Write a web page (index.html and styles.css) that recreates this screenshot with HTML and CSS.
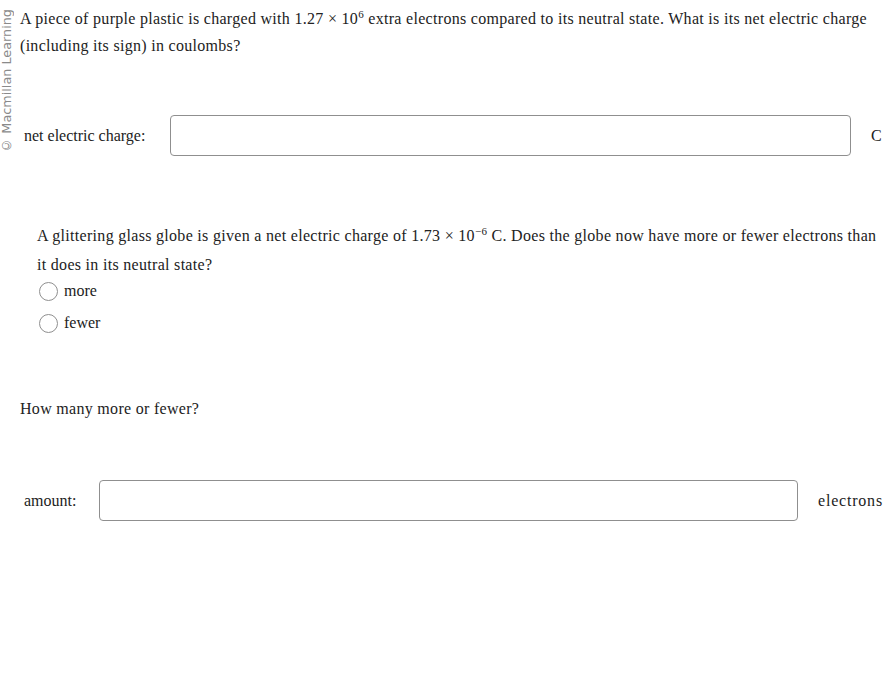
FILE: index.html
```html
<!DOCTYPE html>
<html lang="en">
<head>
  <meta charset="UTF-8">
  <title>Electric Charge</title>
  <link rel="stylesheet" href="styles.css">
</head>
<body>

<div class="page">
  <div class="credit">© Macmillan Learning</div>

  <div class="content">
    <p class="question q1">
      A piece of purple plastic is charged with 1.27 × 10<sup>6</sup> extra electrons compared to its neutral state. What is its net electric charge (including its sign) in coulombs?
    </p>

    <div class="answer-row row-charge">
      <label for="charge" class="answer-label">net electric charge:</label>
      <input type="text" id="charge" class="answer-input">
      <span class="unit">C</span>
    </div>

    <div class="part">
      <p class="question q2">
        A glittering glass globe is given a net electric charge of 1.73 × 10<sup>−6</sup> C. Does the globe now have more or fewer electrons than it does in its neutral state?
      </p>
      <label class="choice"><span class="radio"></span>more</label>
      <label class="choice"><span class="radio"></span>fewer</label>
    </div>

    <p class="question q3">How many more or fewer?</p>

    <div class="answer-row row-amount">
      <label for="amount" class="answer-label">amount:</label>
      <input type="text" id="amount" class="answer-input">
      <span class="unit unit-wide">electrons</span>
    </div>
  </div>
</div>

</body>
</html>
```

FILE: styles.css
```css
body {
  margin: 0;
  padding: 0;
  background: #fff;
  color: #222;
  font-family: 'Liberation Serif', 'Times New Roman', serif;
  font-size: 16px;
}

.page {
  display: flex;
  align-items: flex-start;
}

.credit {
  writing-mode: vertical-rl;
  transform: rotate(180deg);
  font-family: 'DejaVu Sans', sans-serif;
  font-size: 12.8px;
  color: #8a8a8a;
  width: 14px;
  margin-top: 9px;
  line-height: 14px;
}

.content {
  flex: 1;
  padding-left: 6px;
  padding-right: 4px;
}

.question {
  margin: 0;
  letter-spacing: 0.3px;
}

.q1 {
  padding-top: 5px;
  line-height: 27px;
}

sup {
  font-size: 11px;
  line-height: 0;
}

.answer-row {
  display: flex;
  align-items: center;
}

.row-charge {
  margin-top: 56px;
  padding-left: 4px;
}

.row-charge .answer-label {
  width: 146px;
}

.row-charge .answer-input {
  width: 681px;
}

.answer-input {
  height: 41px;
  box-sizing: border-box;
  border: 1px solid #8f8f8f;
  border-radius: 4px;
  margin: 0;
  padding: 0 8px;
  font: inherit;
}

.unit {
  margin-left: 20px;
}

.unit-wide {
  letter-spacing: 0.8px;
}

.part {
  margin-top: 65px;
  padding-left: 17px;
}

.q2 {
  line-height: 29px;
  margin-bottom: -4px;
}

.choice {
  display: flex;
  align-items: center;
  gap: 6px;
  height: 32px;
  padding-left: 2px;
}

.radio {
  width: 17px;
  height: 17px;
  border: 1px solid #8f8f8f;
  border-radius: 50%;
}

.q3 {
  margin-top: 61px;
}

.row-amount {
  margin-top: 62px;
  padding-left: 4px;
}

.row-amount .answer-label {
  width: 75px;
}

.row-amount .answer-input {
  width: 699px;
}
```
